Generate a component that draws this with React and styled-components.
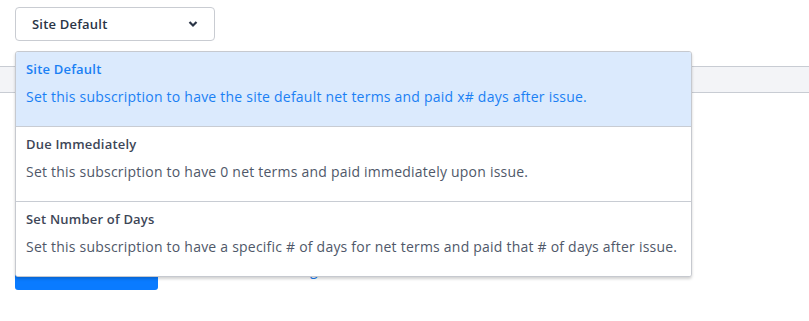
import styled, { createGlobalStyle } from "styled-components";

const GlobalStyle = createGlobalStyle`
  body {
    margin: 0;
    background: #fff;
    font-family: "Open Sans", Roboto, sans-serif;
  }
`;

const options = [
  {
    title: "Site Default",
    text: "Set this subscription to have the site default net terms and paid x# days after issue.",
  },
  {
    title: "Due Immediately",
    text: "Set this subscription to have 0 net terms and paid immediately upon issue.",
  },
  {
    title: "Set Number of Days",
    text: "Set this subscription to have a specific # of days for net terms and paid that # of days after issue.",
  },
];

const Page = styled.div`
  position: relative;
  height: 321px;
  padding-top: 7px;
  box-sizing: border-box;
`;

const SelectWrap = styled.div`
  position: relative;
  margin-left: 15px;
  width: 200px;
`;

const Select = styled.button`
  display: flex;
  align-items: center;
  justify-content: space-between;
  width: 200px;
  height: 34px;
  padding: 0 16px;
  box-sizing: border-box;
  background: #fff;
  border: 1px solid #c9ccd2;
  border-radius: 4px;
  font-family: "Open Sans", sans-serif;
  font-size: 13px;
  font-weight: 600;
  letter-spacing: 0.2px;
  color: #2a3446;
`;

const Band = styled.div`
  margin-top: 25px;
  height: 25px;
  background: #f3f4f7;
  border-top: 1px solid #c8ccd3;
  border-bottom: 1px solid #c8ccd3;
`;

const Spacer = styled.div`
  height: 163px;
`;

const Actions = styled.div`
  display: flex;
  align-items: flex-start;
  gap: 68px;
  padding-left: 15px;
`;

const Primary = styled.button`
  width: 143px;
  height: 34px;
  padding: 0 0 10px;
  background: #0a7bff;
  border: none;
  border-radius: 3px;
  color: #fff;
  font-family: "Open Sans", sans-serif;
  font-size: 14px;
`;

const Link = styled.span`
  margin-top: 4px;
  color: #1a7ef5;
  font-size: 14px;
  line-height: 20px;
`;

const Menu = styled.div`
  position: absolute;
  top: 44px;
  left: 0;
  width: 675px;
  background: #fff;
  border: 1px solid #c6c9cf;
  border-radius: 3px;
  box-shadow: 0 2px 3px rgba(0, 0, 0, 0.18);
  z-index: 10;
  overflow: hidden;
`;

const Option = styled.div`
  height: ${(p) => (p.$first ? 74 : 75)}px;
  padding: 8px 10px 0 10px;
  box-sizing: border-box;
  background: ${(p) => (p.$active ? "#dbeafd" : "#fff")};
  border-top: ${(p) => (p.$first ? "none" : "1px solid #c8ccd3")};
  color: ${(p) => (p.$active ? "#1a80f4" : "#4f5869")};
`;

const OptionTitle = styled.div`
  font-size: 13px;
  font-weight: 600;
  line-height: 18px;
  letter-spacing: 0.2px;
  color: ${(p) => (p.$active ? "#1a80f4" : "#3d4657")};
`;

const OptionText = styled.div`
  margin-top: 9px;
  font-size: 14px;
  line-height: 20px;
  letter-spacing: 0.22px;
`;

function Chevron() {
  return (
    <svg width="10" height="8" viewBox="0 0 10 8">
      <path d="M1.5 2 L5 5.5 L8.5 2" fill="none" stroke="#2a3446" strokeWidth="2.2" />
    </svg>
  );
}

export default function App() {
  return (
    <Page>
      <GlobalStyle />
      <SelectWrap>
        <Select>
          Site Default
          <Chevron />
        </Select>
        <Menu>
          {options.map((o, i) => (
            <Option key={o.title} $active={i === 0} $first={i === 0}>
              <OptionTitle $active={i === 0}>{o.title}</OptionTitle>
              <OptionText>{o.text}</OptionText>
            </Option>
          ))}
        </Menu>
      </SelectWrap>
      <Band />
      <Spacer />
      <Actions>
        <Primary>Save</Primary>
        <Link>Cancel Editing</Link>
      </Actions>
    </Page>
  );
}
